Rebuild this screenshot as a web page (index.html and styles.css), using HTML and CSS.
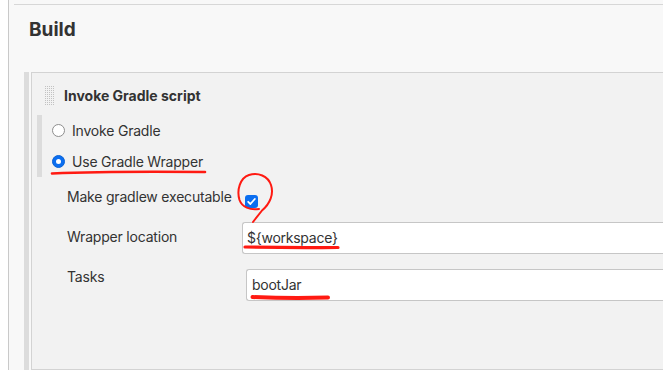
FILE: index.html
```html
<!DOCTYPE html>
<html>
<head>
<meta charset="utf-8">
<link rel="stylesheet" href="styles.css">
</head>
<body>
<div class="page">
  <div class="section-head">
    <h2 class="section-title">Build</h2>
  </div>
  <div class="step">
    <div class="step-body">
      <div class="step-header">
        <span class="drag-handle"></span>
        <span class="step-title">Invoke Gradle script</span>
      </div>
      <div class="radio-group">
        <label class="radio-row"><span class="radio"></span><span class="radio-label">Invoke Gradle</span></label>
        <label class="radio-row"><span class="radio radio-checked"></span><span class="radio-label">Use Gradle Wrapper</span></label>
      </div>
      <div class="field field-check">
        <span class="field-label">Make gradlew executable</span>
        <span class="checkbox"><svg width="13" height="13" viewBox="0 0 13 13"><path d="M3.2 6.8 L5.4 9 L9.8 4" fill="none" stroke="#fff" stroke-width="1.8" stroke-linecap="round" stroke-linejoin="round"/></svg></span>
      </div>
      <div class="field field-wrapper">
        <span class="field-label">Wrapper location</span>
        <span class="text-input input-wrapper">${workspace}</span>
      </div>
      <div class="field field-tasks">
        <span class="field-label">Tasks</span>
        <span class="text-input input-tasks">bootJar</span>
      </div>
    </div>
  </div>
  <svg class="annotations" width="663" height="370" viewBox="0 0 663 370">
    <path d="M52 173.5 Q110 171 205 172" fill="none" stroke="#ff1a12" stroke-width="2.6" stroke-linecap="round"/>
    <path d="M253 222 L262 210.5 C270 204 274 194 271 185 C268 176 258 172 249 175 C240 178 236.5 190 239.5 200 C242 207 250 210.5 259 209" fill="none" stroke="#ff1a12" stroke-width="2" stroke-linecap="round" stroke-linejoin="round"/>
    <path d="M245 247 Q290 248 338 247.5" fill="none" stroke="#ff1a12" stroke-width="3.2" stroke-linecap="round"/>
    <path d="M252.5 297 Q290 298.5 328 297.5" fill="none" stroke="#ff1a12" stroke-width="4" stroke-linecap="round"/>
  </svg>
</div>
</body>
</html>
```
FILE: styles.css
```css
html, body {
  margin: 0;
  padding: 0;
  background: #ffffff;
  overflow: hidden;
}

body {
  font-family: Inter, "Liberation Sans", sans-serif;
  color: #333333;
  width: 663px;
  height: 370px;
}

.page {
  position: relative;
  margin-left: 8px;
  height: 370px;
  border-left: 1px solid #c9c9c9;
  background: #f8f8f8;
  display: flex;
  flex-direction: column;
}

.section-head {
  margin-top: 4px;
  margin-left: 5px;
  height: 67px;
  border-top: 1px solid #d7d7d7;
}

.section-title {
  margin: 0;
  padding-left: 15px;
  padding-top: 13px;
  font-size: 19px;
  line-height: 24px;
  font-weight: 700;
  color: #333333;
}

.step {
  margin-left: 15px;
  flex: 1;
  display: flex;
  border-left: 5px solid #dcdcdc;
  padding-left: 2px;
}

.step-body {
  flex: 1;
  min-width: 0;
  background: #f2f2f2;
  border-left: 1px solid #d3d3d3;
  border-top: 1px solid #d3d3d3;
  border-bottom: 1px solid #d3d3d3;
  display: flex;
  flex-direction: column;
}

.step-header {
  display: flex;
  align-items: center;
  margin-top: 12px;
  padding-left: 12px;
  height: 20px;
}

.drag-handle {
  width: 11px;
  height: 20px;
  background-color: #c2c2c2;
  background-image:
    linear-gradient(to right, #f2f2f2 1px, transparent 1px),
    linear-gradient(to bottom, #f2f2f2 1px, transparent 1px);
  background-size: 2px 2px;
  margin-right: 9px;
}

.step-title {
  font-size: 14px;
  font-weight: 700;
  color: #333333;
  white-space: nowrap;
}

.radio-group {
  margin-top: 10px;
  margin-left: 5px;
  border-left: 5px solid #dcdcdc;
  display: flex;
  flex-direction: column;
}

.radio-row {
  display: flex;
  align-items: center;
  height: 31px;
  padding-left: 10px;
  font-size: 14px;
  letter-spacing: -0.2px;
  white-space: nowrap;
}

.radio {
  width: 13px;
  height: 13px;
  box-sizing: border-box;
  border-radius: 50%;
  background: #ffffff;
  border: 1px solid #8e8e8e;
  margin-right: 7px;
  position: relative;
  flex: none;
}

.radio-checked {
  background: #0b6ef0;
  border-color: #0a63d6;
}

.radio-checked::after {
  content: "";
  position: absolute;
  left: 3px;
  top: 3px;
  width: 5px;
  height: 5px;
  border-radius: 50%;
  background: #ffffff;
}

.field {
  display: flex;
  align-items: flex-start;
  padding-left: 35px;
  font-size: 14px;
  letter-spacing: -0.2px;
}

.field-label {
  width: 175px;
  flex: none;
  line-height: 20px;
  white-space: nowrap;
}

.field-check {
  height: 45px;
}

.field-check .field-label {
  padding-top: 10px;
}

.checkbox {
  margin-top: 18px;
  margin-left: 3px;
  width: 13px;
  height: 13px;
  border-radius: 3px;
  background: #0b6ef0;
  display: flex;
}

.text-input {
  display: block;
  flex: 1;
  min-width: 0;
  height: 32px;
  box-sizing: border-box;
  background: #ffffff;
  border: 1px solid #c6c6c6;
  border-right: none;
  border-radius: 3px 0 0 3px;
  line-height: 30px;
  padding-left: 4px;
  color: #333333;
  font-size: 14px;
  letter-spacing: -0.25px;
  white-space: nowrap;
}

.field-wrapper {
  height: 45px;
}

.field-wrapper .field-label {
  padding-top: 5px;
}

.field-tasks .field-label {
  padding-top: 0;
}

.input-tasks {
  margin-top: 2px;
  margin-left: 4px;
  padding-left: 5px;
}

.annotations {
  position: absolute;
  left: -9px;
  top: 0;
  pointer-events: none;
}
```
